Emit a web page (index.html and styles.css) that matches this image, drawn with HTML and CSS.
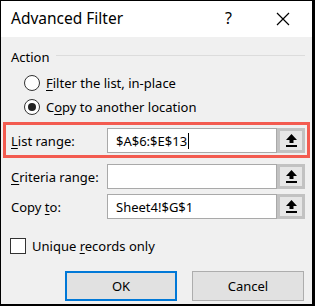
FILE: index.html
```html
<!DOCTYPE html>
<html lang="en">

<head>
    <meta charset="UTF-8">
    <title>Advanced Filter</title>
    <link rel="stylesheet" href="styles.css">
</head>

<body>
    <div class="dialog">
        <div class="title-bar">
            <span class="title">Advanced Filter</span>
            <span class="help">?</span>
            <span class="close">
                <svg width="14" height="14" viewBox="0 0 14 14"><path d="M1 1L13 13M13 1L1 13" stroke="#000" stroke-width="1.2"/></svg>
            </span>
        </div>

        <div class="content">
            <div class="group-head">
                <span>Action</span>
                <div class="rule"></div>
            </div>

            <label class="radio-row">
                <span class="radio"></span>
                <span><u>F</u>ilter the list, in-place</span>
            </label>
            <label class="radio-row">
                <span class="radio checked"></span>
                <span>C<u>o</u>py to another location</span>
            </label>

            <div class="field highlight">
                <span class="label"><span><u>L</u>ist range:</span></span>
                <div class="input"><span>$A$6:$E$13</span><span class="caret"></span></div>
                <button class="pick"><svg width="11" height="13" viewBox="0 0 11 13"><path d="M5.5 0L11 6H7.5V9H3.5V6H0Z" fill="#000"/><rect x="0" y="11" width="11" height="2" fill="#000"/></svg></button>
            </div>
            <div class="field">
                <span class="label"><span><u>C</u>riteria range:</span></span>
                <div class="input"></div>
                <button class="pick"><svg width="11" height="13" viewBox="0 0 11 13"><path d="M5.5 0L11 6H7.5V9H3.5V6H0Z" fill="#000"/><rect x="0" y="11" width="11" height="2" fill="#000"/></svg></button>
            </div>
            <div class="field">
                <span class="label"><span>Copy <u>t</u>o:</span></span>
                <div class="input"><span>Sheet4!$G$1</span></div>
                <button class="pick"><svg width="11" height="13" viewBox="0 0 11 13"><path d="M5.5 0L11 6H7.5V9H3.5V6H0Z" fill="#000"/><rect x="0" y="11" width="11" height="2" fill="#000"/></svg></button>
            </div>

            <label class="check-row">
                <span class="checkbox"></span>
                <span>Unique <u>r</u>ecords only</span>
            </label>

            <div class="actions">
                <button class="btn default">OK</button>
                <button class="btn">Cancel</button>
            </div>
        </div>
    </div>
</body>

</html>
```

FILE: styles.css
```css
body {
    margin: 0;
    font-family: "Noto Sans", "DejaVu Sans", sans-serif;
    font-size: 13px;
    color: #000;
}

u {
    text-decoration: underline;
    text-underline-offset: 2px;
}

.dialog {
    width: 315px;
    height: 306px;
    box-sizing: border-box;
    border-style: solid;
    border-color: #000;
    border-width: 1px 3px 2px 1px;
    background-color: #f0f0f0;
    display: flex;
    flex-direction: column;
}

.title-bar {
    height: 36px;
    background-color: #fff;
    display: flex;
    align-items: center;
    padding-left: 10px;
}

.title {
    font-size: 15.5px;
    flex: 1;
    padding-bottom: 2px;
}

.help {
    font-size: 16px;
    width: 51px;
    padding-bottom: 2px;
}

.close {
    width: 36px;
    display: flex;
    align-items: center;
}

.content {
    padding-top: 11px;
    display: flex;
    flex-direction: column;
}

.group-head {
    height: 18px;
    display: flex;
    align-items: center;
    padding: 0 7px 0 10px;
}

.group-head .rule {
    flex: 1;
    height: 1px;
    background-color: #dcdcdc;
    margin-left: 6px;
    margin-top: -3px;
}

.radio-row {
    height: 24px;
    display: flex;
    align-items: center;
    padding-left: 23px;
}

.radio-row:first-of-type {
    margin-top: 5px;
}

.radio {
    width: 14px;
    height: 14px;
    border: 1px solid #333;
    border-radius: 50%;
    background-color: #fff;
    margin-right: 6px;
    display: flex;
    align-items: center;
    justify-content: center;
}

.radio.checked::after {
    content: "";
    width: 8px;
    height: 8px;
    border-radius: 50%;
    background-color: #222;
}

.field {
    height: 25px;
    display: flex;
    align-items: stretch;
    padding: 0 7px 0 10px;
    margin-top: 5px;
}

.field.highlight {
    margin: 3px 2px 1px 2px;
    padding: 3px 2px 2px 5px;
    border: 3px solid #f35b50;
}

.label {
    width: 96px;
    display: flex;
    align-items: center;
}

.input {
    flex: 1;
    box-sizing: border-box;
    background-color: #fff;
    border: 1px solid #a9a9a9;
    padding-left: 8px;
    display: flex;
    align-items: center;
}

.caret {
    width: 1px;
    height: 16px;
    background-color: #000;
    margin-left: 1px;
}

.pick {
    width: 28px;
    padding: 0;
    box-sizing: border-box;
    border: 3px solid #c2c2c2;
    background-color: #e6e6e6;
    display: flex;
    align-items: center;
    justify-content: center;
}

.check-row {
    height: 18px;
    margin-top: 18px;
    display: flex;
    align-items: center;
    padding-left: 9px;
}

.checkbox {
    width: 14px;
    height: 14px;
    border: 1px solid #333;
    background-color: #fff;
    margin-right: 6px;
}

.actions {
    display: flex;
    justify-content: flex-end;
    gap: 15px;
    padding-right: 8px;
    margin-top: 16px;
}

.btn {
    width: 112px;
    height: 30px;
    font-family: inherit;
    font-size: 13px;
    background-color: #e1e1e1;
    border: 1px solid #adadad;
    padding: 0;
}

.btn.default {
    border: 2px solid #0078d7;
}
```
